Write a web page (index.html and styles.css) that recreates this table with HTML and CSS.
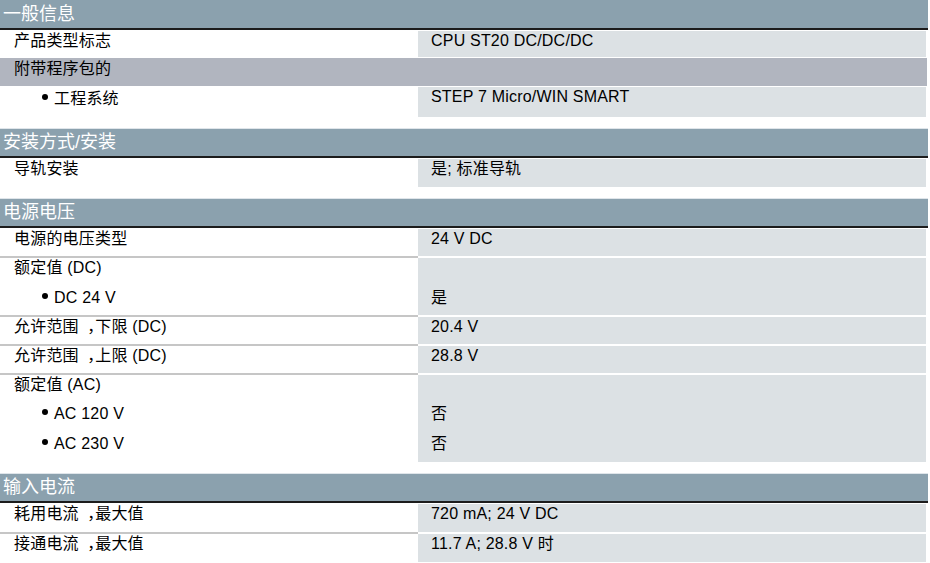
FILE: index.html
```html
<!DOCTYPE html>
<html lang="zh-CN">
<head>
<meta charset="utf-8">
<title>CPU ST20 DC/DC/DC</title>
<link rel="stylesheet" href="styles.css">
</head>
<body>
<div class="spec">
  <section class="sec sec-first">
    <h2 class="sec-head">一般信息</h2>
    <div class="grp">
      <div class="lbl"><div class="ln h26">产品类型标志</div></div>
      <div class="val"><div class="ln h26">CPU ST20 DC/DC/DC</div></div>
    </div>
    <div class="sub">附带程序包的</div>
    <div class="grp">
      <div class="lbl"><div class="ln h30 bul"><span class="dot"></span>工程系统</div></div>
      <div class="val"><div class="ln h30">STEP 7 Micro/WIN SMART</div></div>
    </div>
  </section>

  <section class="sec">
    <h2 class="sec-head">安装方式/安装</h2>
    <div class="grp">
      <div class="lbl"><div class="ln h28">导轨安装</div></div>
      <div class="val"><div class="ln h28">是; 标准导轨</div></div>
    </div>
  </section>

  <section class="sec">
    <h2 class="sec-head">电源电压</h2>
    <div class="grp">
      <div class="lbl"><div class="ln h27">电源的电压类型</div></div>
      <div class="val"><div class="ln h27">24 V DC</div></div>
    </div>
    <div class="grp">
      <div class="lbl">
        <div class="ln h28">额定值 (DC)</div>
        <div class="ln h29 bul"><span class="dot"></span>DC 24 V</div>
      </div>
      <div class="val">
        <div class="ln h28"></div>
        <div class="ln h29 bul-v">是</div>
      </div>
    </div>
    <div class="grp">
      <div class="lbl"><div class="ln h27">允许范围<span class="fw">，</span>下限 (DC)</div></div>
      <div class="val"><div class="ln h27">20.4 V</div></div>
    </div>
    <div class="grp">
      <div class="lbl"><div class="ln h27">允许范围<span class="fw">，</span>上限 (DC)</div></div>
      <div class="val"><div class="ln h27">28.8 V</div></div>
    </div>
    <div class="grp">
      <div class="lbl">
        <div class="ln h27">额定值 (AC)</div>
        <div class="ln h30 bul"><span class="dot"></span>AC 120 V</div>
        <div class="ln h30 bul"><span class="dot"></span>AC 230 V</div>
      </div>
      <div class="val">
        <div class="ln h27"></div>
        <div class="ln h30 bul-v">否</div>
        <div class="ln h30 bul-v">否</div>
      </div>
    </div>
  </section>

  <section class="sec">
    <h2 class="sec-head">输入电流</h2>
    <div class="grp">
      <div class="lbl"><div class="ln h28">耗用电流<span class="fw">，</span>最大值</div></div>
      <div class="val"><div class="ln h28">720 mA; 24 V DC</div></div>
    </div>
    <div class="grp">
      <div class="lbl"><div class="ln h28">接通电流<span class="fw">，</span>最大值</div></div>
      <div class="val"><div class="ln h28">11.7 A; 28.8 V 时</div></div>
    </div>
  </section>
</div>
</body>
</html>
```

FILE: styles.css
```css
* {
  box-sizing: border-box;
}

html, body {
  margin: 0;
  padding: 0;
  background: #ffffff;
}

body {
  font-family: "Liberation Sans", "Noto Sans CJK SC", sans-serif;
  font-size: 16px;
  letter-spacing: 0.2px;
  color: #000000;
}

.spec {
  width: 928px;
}

.sec + .sec {
  margin-top: 11px;
  border-top: 1px solid #dfe5ea;
}

.sec-head {
  margin: 0;
  height: 29px;
  padding-left: 3px;
  background: #8ba1ae;
  border-bottom: 2px solid #1c1c1c;
  color: #ffffff;
  font-size: 18px;
  font-weight: normal;
  line-height: 27px;
  letter-spacing: 0;
}

.sec-first .sec-head {
  height: 30px;
  line-height: 28px;
}

.grp {
  display: grid;
  grid-template-columns: 418px 1fr;
  margin-right: 2px;
}

.sec-head + .grp {
  margin-top: 1px;
}

.grp + .grp .lbl {
  border-top: 2px solid #c6c6c6;
}

.grp + .grp .val {
  border-top: 2px solid #ffffff;
}

.lbl {
  padding-left: 14px;
  background: #ffffff;
}

.val {
  padding-left: 13px;
  background: #dce1e4;
}

.sub {
  margin-top: 1px;
  margin-bottom: 1px;
  margin-right: 1px;
  height: 28px;
  padding-left: 14px;
  padding-top: 2px;
  line-height: 18px;
  background: #b1b5bf;
}

.ln {
  padding-top: 1px;
  line-height: 18px;
  white-space: nowrap;
}

.h26 { height: 26px; }
.h27 { height: 27px; }
.h28 { height: 28px; }
.h29 { height: 29px; }
.h30 { height: 30px; }

.bul {
  padding-left: 28px;
  padding-top: 3px;
}

.bul-v {
  padding-top: 3px;
}

.fw {
  display: inline-block;
  width: 16.4px;
  text-align: right;
  letter-spacing: 0;
  font-feature-settings: "halt" 1;
}

.dot {
  display: inline-block;
  width: 6px;
  height: 6px;
  margin-right: 6px;
  border-radius: 50%;
  background: #000000;
  vertical-align: 0.22em;
}
```
